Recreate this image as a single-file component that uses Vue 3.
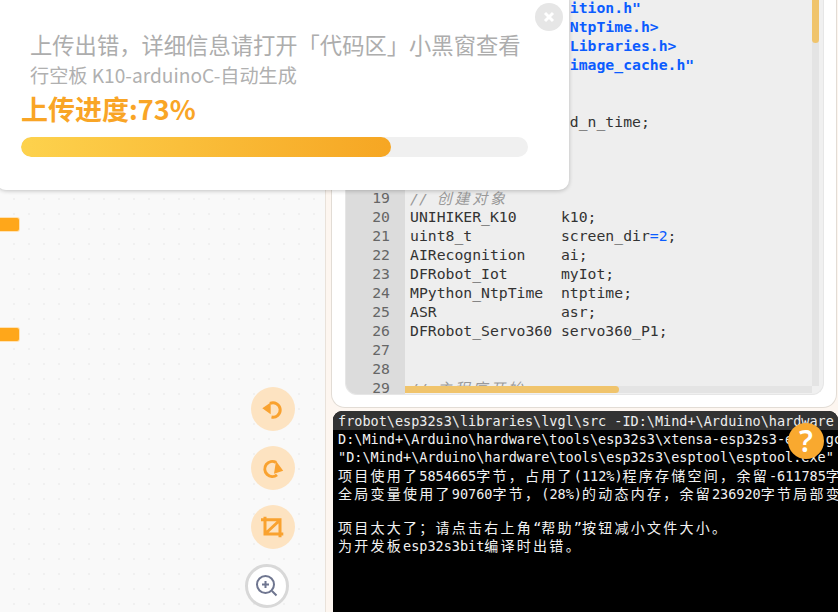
<script setup>
const split = (s) =>
  s.split(/([\u3000-\u9fff\uff00-\uffef]+)/).filter(Boolean).map((t) => ({ t, cjk: /[\u3000-\u9fff\uff00-\uffef]/.test(t) }))

const pad = ' '.repeat(18)
const code = [
  { n: 9, parts: [{ c: 'inc', t: pad + 'ition.h"' }] },
  { n: 10, parts: [{ c: 'inc', t: pad + 'NtpTime.h>' }] },
  { n: 11, parts: [{ c: 'inc', t: pad + 'Libraries.h>' }] },
  { n: 12, parts: [{ c: 'inc', t: pad + 'image_cache.h"' }] },
  { n: 13, parts: [] },
  { n: 14, parts: [] },
  { n: 15, parts: [{ c: '', t: pad + 'd_n_time;' }] },
  { n: 16, parts: [] },
  { n: 17, parts: [] },
  { n: 18, parts: [] },
  { n: 19, parts: [{ c: 'cmt', t: '// 创建对象' }] },
  { n: 20, parts: [{ c: '', t: 'UNIHIKER_K10     k10;' }] },
  { n: 21, parts: [{ c: '', t: 'uint8_t          screen_dir' }, { c: 'num', t: '=2' }, { c: '', t: ';' }] },
  { n: 22, parts: [{ c: '', t: 'AIRecognition    ai;' }] },
  { n: 23, parts: [{ c: '', t: 'DFRobot_Iot      myIot;' }] },
  { n: 24, parts: [{ c: '', t: 'MPython_NtpTime  ntptime;' }] },
  { n: 25, parts: [{ c: '', t: 'ASR              asr;' }] },
  { n: 26, parts: [{ c: '', t: 'DFRobot_Servo360 servo360_P1;' }] },
  { n: 27, parts: [] },
  { n: 28, parts: [] },
  { n: 29, parts: [{ c: 'cmt', t: '// 主程序开始' }] },
]

const terminal = [
  'D:\\Mind+\\Arduino\\hardware\\tools\\esp32s3\\xtensa-esp32s3-elf- gcc',
  '"D:\\Mind+\\Arduino\\hardware\\tools\\esp32s3\\esptool\\esptool.exe"',
  '项目使用了5854665字节，占用了(112%)程序存储空间，余留-611785字节',
  '全局变量使用了90760字节，(28%)的动态内存，余留236920字节局部变量',
  '',
  '项目太大了；请点击右上角“帮助”按钮减小文件大小。',
  '为开发板esp32s3bit编译时出错。',
]
</script>

<template>
  <div class="app">
    <section class="workspace">
      <span class="stub stub-a"></span>
      <span class="stub stub-b"></span>
      <div class="tools">
        <button class="tool">
          <svg viewBox="0 0 24 24" width="24" height="24">
            <path class="ico" d="M9 6.4A7.2 7.2 0 1 1 10.5 20" />
            <path class="tip" d="M1.3 11.3L9.7 5.6V17.3Z" />
          </svg>
        </button>
        <button class="tool">
          <svg viewBox="0 0 24 24" width="24" height="24">
            <path class="ico" d="M15 6.4A7.5 7.5 0 1 0 16 18.8" />
            <path class="tip" d="M22.2 14.8L15 5L13 17.8Z" />
          </svg>
        </button>
        <button class="tool">
          <svg viewBox="0 0 24 24" width="24" height="24">
            <path class="ico" d="M4 1.7V19H22.3M0 4.7H19V22.3M5 18L18.5 5.5" />
          </svg>
        </button>
        <button class="tool zoom">
          <svg viewBox="0 0 24 24" width="24" height="24">
            <circle class="mag" cx="10.5" cy="10.5" r="8.5" />
            <path class="mag" d="M17 17L21.5 21.5M7 10.5H14M10.5 7V14" />
          </svg>
        </button>
      </div>
    </section>

    <div class="splitter"></div>

    <section class="side">
      <div class="card">
        <div class="editor">
          <div class="gutter">
            <div v-for="l in code" :key="l.n" class="ln">{{ l.n }}</div>
          </div>
          <div class="pane">
            <div class="pane-top">
              <div class="code">
                <div v-for="l in code" :key="l.n" class="row">
                  <span v-for="(p, i) in l.parts" :key="i" :class="p.c"><template v-for="(s, j) in split(p.t)" :key="j"><span :class="{ 'cjk-code': s.cjk }">{{ s.t }}</span></template></span>
                </div>
              </div>
              <div class="vtrack"><div class="vthumb"></div></div>
            </div>
            <div class="htrack"><div class="hthumb"></div></div>
          </div>
        </div>
      </div>

      <div class="terminal">
        <div class="term-head">frobot\esp32s3\libraries\lvgl\src -ID:\Mind+\Arduino\hardware</div>
        <div class="term-body">
          <div v-for="(line, i) in terminal" :key="i" class="term-line" :class="{ blank: !line }">
            <template v-for="(s, j) in split(line)" :key="j"><span :class="{ 'cjk-term': s.cjk }">{{ s.t }}</span></template>
          </div>
        </div>
      </div>
    </section>

    <div class="modal">
      <button class="close">
        <svg viewBox="0 0 12 12" width="12" height="12"><path d="M2 2L10 10M10 2L2 10" /></svg>
      </button>
      <h1 class="title">上传出错，详细信息请打开「代码区」小黑窗查看</h1>
      <p class="sub">行空板 K10-arduinoC-自动生成</p>
      <p class="prog">上传进度:73%</p>
      <div class="track"><div class="fill" :style="{ width: '73%' }"></div></div>
    </div>

    <button class="help">?</button>
  </div>
</template>

<style scoped>
.app {
  position: relative;
  display: flex;
  width: 838px;
  height: 612px;
  overflow: hidden;
  font-family: "Noto Sans CJK SC", "Noto Sans", sans-serif;
}
.workspace {
  position: relative;
  width: 325px;
  flex: none;
  background-color: #f9f9f9;
  background-image: radial-gradient(circle at 1px 1px, #f0f0f0 1px, transparent 1.4px);
  background-size: 15px 15px;
  background-position: 13px 3px;
}
.stub {
  position: absolute;
  left: -4px;
  width: 22.5px;
  height: 13px;
  background: #ffa71a;
  border-radius: 2px;
  box-shadow: 0 0 0 1px #ffe2b5;
}
.stub-a { top: 218px; }
.stub-b { top: 328px; }
.tools {
  position: absolute;
  top: 387px;
  right: 30px;
  display: flex;
  flex-direction: column;
  align-items: flex-end;
  gap: 15px;
}
.tool {
  width: 44px;
  height: 44px;
  padding: 0;
  border: 0;
  border-radius: 50%;
  background: #fde3c1;
  display: flex;
  align-items: center;
  justify-content: center;
}
.zoom {
  margin-right: 6px;
  background: #fff;
  border: 3px solid #d8d8d8;
}
.ico { fill: none; stroke: #f9a22f; stroke-width: 3; }
.tip { fill: #f9a22f; }
.mag { fill: none; stroke: #6f7690; stroke-width: 2; }
.splitter {
  width: 6px;
  flex: none;
  box-sizing: border-box;
  background: #fdf6f0;
  border-left: 1px solid #e9e2da;
}
.side {
  flex: 1;
  min-width: 0;
  display: flex;
  flex-direction: column;
  background: #fdf6f0;
}
.card {
  height: 408px;
  flex: none;
  box-sizing: border-box;
  background: #fff;
  border: 1px solid #e2dcd5;
  border-top: 0;
  border-radius: 0 0 14px 14px;
  padding: 0 12px 12px 13px;
  margin-right: 1px;
  display: flex;
}
.editor {
  flex: 1;
  min-width: 0;
  display: flex;
  border: 1px solid #e6e6e6;
  border-top: 0;
  border-radius: 0 0 12px 12px;
  overflow: hidden;
  background: #f0f0f0;
  font-family: "DejaVu Sans Mono", "Noto Sans CJK SC", monospace;
  font-size: 14.75px;
  line-height: 19px;
  color: #333;
}
.gutter {
  width: 59px;
  flex: none;
  box-sizing: border-box;
  padding-right: 15px;
  background: #dcdcdc;
  color: #666;
  text-align: right;
  overflow: hidden;
}
.ln:first-child, .row:first-child { margin-top: -2px; }
.pane {
  flex: 1;
  min-width: 0;
  display: flex;
  flex-direction: column;
}
.pane-top {
  flex: 1;
  min-height: 0;
  display: flex;
  padding-right: 4px;
}
.code {
  flex: 1;
  min-width: 0;
  padding-left: 5px;
  background: #eeeeee;
  overflow: hidden;
}
.row {
  height: 19px;
  white-space: pre;
}
.inc { color: #0b5cff; font-weight: 700; }
.cmt { color: #999; font-style: italic; }
.num { color: #0b5cff; }
.cjk-code {
  font-family: "Noto Sans CJK SC", sans-serif;
  font-size: 15px;
  letter-spacing: 2.76px;
}
.vtrack {
  width: 7px;
  flex: none;
  background: #e4e4e4;
}
.vthumb {
  height: 43px;
  background: #f0c46c;
  border-radius: 0 0 4px 4px;
}
.htrack {
  height: 7px;
  flex: none;
  margin-right: 11px;
  margin-bottom: 1px;
  background: #e4e4e4;
}
.hthumb {
  width: 214px;
  height: 7px;
  background: #f0c46c;
  border-radius: 0 4px 4px 0;
}
.terminal {
  flex: 1;
  min-height: 0;
  margin: 3px 0 0 2px;
  background: #000;
  border-radius: 9px 9px 0 0;
  overflow: hidden;
  font-family: "DejaVu Sans Mono", "Noto Sans CJK SC", monospace;
  font-size: 13.5px;
  line-height: 18px;
  color: #f2f2f2;
}
.term-head {
  height: 19px;
  padding-left: 5px;
  background: #333;
  white-space: pre;
  color: #eee;
  line-height: 20px;
}
.term-body { padding: 0 0 0 5px; }
.term-line {
  height: 18px;
  white-space: pre;
}
.term-line.blank { height: 16px; }
.cjk-term {
  font-family: "Noto Sans CJK SC", sans-serif;
  font-size: 14px;
  letter-spacing: 2.26px;
}
.modal {
  position: absolute;
  left: -4px;
  top: -10px;
  width: 573px;
  height: 200px;
  box-sizing: border-box;
  background: #fff;
  border-radius: 10px;
  box-shadow: 0 1px 4px rgba(0, 0, 0, 0.22);
  padding: 38px 0 0 25px;
}
.close {
  position: absolute;
  top: 13px;
  right: 6px;
  width: 28px;
  height: 28px;
  padding: 0;
  border: 0;
  border-radius: 50%;
  background: #e6e6e6;
  display: flex;
  align-items: center;
  justify-content: center;
}
.close path { fill: none; stroke: #fff; stroke-width: 3; }
.title {
  margin: 0 0 0 9px;
  font-size: 22.3px;
  font-weight: 400;
  line-height: 32px;
  color: #adadad;
  white-space: nowrap;
}
.sub {
  margin: 2px 0 0 9px;
  font-size: 19.15px;
  line-height: 26px;
  color: #b0b0b0;
  white-space: nowrap;
}
.prog {
  margin: 1px 0 0;
  font-size: 27px;
  font-weight: 700;
  line-height: 40px;
  color: #f9a526;
  white-space: nowrap;
}
.track {
  width: 507px;
  height: 20px;
  margin-top: 8px;
  border-radius: 10px;
  background: #f0f0f0;
  overflow: hidden;
}
.fill {
  height: 100%;
  border-radius: 10px;
  background: linear-gradient(90deg, #fdd24d, #f6a623);
}
.help {
  position: absolute;
  left: 788px;
  top: 423px;
  width: 36px;
  height: 36px;
  padding: 0;
  border: 0;
  border-radius: 50%;
  background: #f9a92f;
  color: #fff;
  font-family: "Noto Sans", sans-serif;
  font-size: 30px;
  font-weight: 600;
  line-height: 36px;
  text-align: center;
}
</style>
